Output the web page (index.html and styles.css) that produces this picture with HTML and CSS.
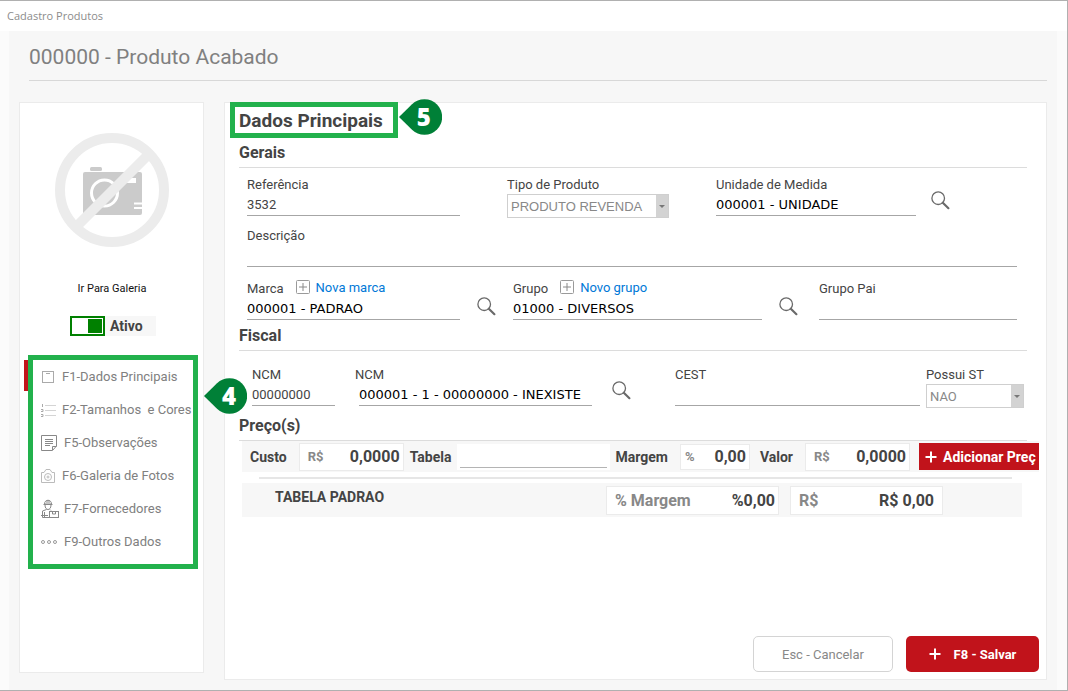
FILE: index.html
```html
<!DOCTYPE html>
<html lang="pt-BR">
<head>
    <meta charset="UTF-8">
    <meta name="viewport" content="width=device-width, initial-scale=1.0">
    <title>Cadastro Produtos</title>
    <link rel="stylesheet" href="styles.css">
</head>
<body>
    <svg width="0" height="0" class="sprite">
        <symbol id="lens" viewBox="0 0 19 19">
            <circle cx="7.2" cy="7.2" r="6.3" fill="none" stroke="#6a6a6a" stroke-width="1.3"/>
            <path d="M11.8 11.8L17.4 17.2" stroke="#6a6a6a" stroke-width="2.2" stroke-linecap="round"/>
        </symbol>
        <symbol id="plus-box" viewBox="0 0 14 14">
            <rect x="0.5" y="0.5" width="13" height="13" rx="1" fill="none" stroke="#9a9a9a"/>
            <path d="M3 7H11M7 3V11" stroke="#8a8a8a"/>
        </symbol>
        <symbol id="drop" viewBox="0 0 43 36">
            <path d="M0 18L13 5.200A17.800 17.800 0 1 1 13 30.800Z" fill="#008037"/>
        </symbol>
    </svg>

    <div class="window">
        <header class="titlebar">Cadastro Produtos</header>
        <div class="page">
            <h1>000000 - Produto Acabado</h1>
            <div class="columns">
                <aside class="card sidebar">
                    <svg class="no-photo" viewBox="0 0 114 114" width="114" height="114">
                        <rect x="35" y="34" width="12" height="4" rx="1.500" fill="#cbcbcb"/>
                        <rect x="28" y="39" width="59" height="43" rx="2" fill="#cbcbcb"/>
                        <circle cx="49.500" cy="60" r="13" fill="none" stroke="#fff" stroke-width="3"/>
                        <path d="M66 47.500H81" stroke="#fff" stroke-width="5"/>
                        <path d="M79 70.500H87M79 75H87" stroke="#fff" stroke-width="2"/>
                        <path d="M21 94L93 22" stroke="#ececec" stroke-width="10"/>
                        <circle cx="57" cy="57" r="52" fill="none" stroke="#ececec" stroke-width="10"/>
                    </svg>
                    <a class="gallery" href="#">Ir Para Galeria</a>
                    <div class="status">
                        <input type="checkbox" id="ativo" checked>
                        <label for="ativo">Ativo</label>
                    </div>
                    <nav class="menu">
                        <a class="active" href="#">
                            <svg width="16" height="16" viewBox="0 0 16 16" fill="none" stroke="#aaa"><rect x="1.500" y="2.500" width="11" height="11"/><path d="M5 4.500H9"/></svg>
                            F1-Dados Principais
                        </a>
                        <a href="#">
                            <svg width="16" height="16" viewBox="0 0 16 16" fill="none" stroke="#d4d4d4"><path d="M4 3.500H15M4 8.500H15M4 13.500H15"/><path d="M1.500 2V5M0 7.500H2V9.500H0M0 12.500H2V14.500H0" stroke="#aaa"/></svg>
                            F2-Tamanhos&nbsp; e Cores
                        </a>
                        <a href="#">
                            <svg width="18" height="18" viewBox="0 0 18 18" fill="none" stroke="#888"><path d="M0.500 1.500H15.500V12L11.500 16.500H0.500ZM11.500 16V12.500H15.500"/><path d="M4 5.500H12M4 7.500H12M4 9.500H12M4 11.500H9"/></svg>
                            F5-Observações
                        </a>
                        <a href="#">
                            <svg width="16" height="16" viewBox="0 0 16 16" fill="none" stroke="#bbb"><path d="M0.500 4.500H3L5 1.500H9L11 4.500H13.500V14.500H0.500Z"/><circle cx="7" cy="9" r="3.500"/><circle cx="7" cy="9" r="1"/></svg>
                            F6-Galeria de Fotos
                        </a>
                        <a href="#">
                            <svg width="18" height="20" viewBox="0 0 18 20" fill="none" stroke="#888"><path d="M3.500 5C3.500 0 10.500 0 10.500 5ZM2.500 5.500H11.500M4 6C4 12 10 12 10 6M6 1V4M8 1V4"/><path d="M5.500 10.500L1.500 12V18.500H8M9 10.500L10 11.500M3.500 13V18M0 16.500H7"/><rect x="8.500" y="12.500" width="9" height="6"/><path d="M11.500 12.500V15H14.500V12.500"/></svg>
                            F7-Fornecedores
                        </a>
                        <a href="#">
                            <svg width="18" height="6" viewBox="0 0 18 6" fill="none" stroke="#999"><circle cx="2" cy="3" r="1.500"/><circle cx="8" cy="3" r="1.500"/><circle cx="14" cy="3" r="1.500"/></svg>
                            F9-Outros Dados
                        </a>
                        <span class="callout"><svg><use href="#drop"/></svg><b>4</b></span>
                    </nav>
                </aside>

                <main class="card content">
                    <h2>Dados Principais<span class="callout"><svg><use href="#drop"/></svg><b>5</b></span></h2>

                    <h3>Gerais</h3>
                    <div class="row row-ref">
                        <div class="field">
                            <label for="referencia">Referência</label>
                            <input type="text" id="referencia" value="3532">
                        </div>
                        <div class="field">
                            <label for="tipo">Tipo de Produto</label>
                            <div class="select arial"><select id="tipo"><option>PRODUTO REVENDA</option></select></div>
                        </div>
                        <div class="with-lens">
                            <div class="field">
                                <label for="unidade">Unidade de Medida</label>
                                <input class="code" type="text" id="unidade" value="000001 - UNIDADE">
                            </div>
                            <button class="lens" aria-label="Buscar unidade"><svg><use href="#lens"/></svg></button>
                        </div>
                    </div>
                    <div class="row row-desc">
                        <div class="field">
                            <label for="descricao">Descrição</label>
                            <input type="text" id="descricao">
                        </div>
                    </div>
                    <div class="row row-group">
                        <div class="field">
                            <div class="label-line">
                                <label for="marca">Marca</label>
                                <a class="add" href="#"><svg><use href="#plus-box"/></svg>Nova marca</a>
                            </div>
                            <input class="code" type="text" id="marca" value="000001 - PADRAO">
                        </div>
                        <button class="lens" aria-label="Buscar marca"><svg><use href="#lens"/></svg></button>
                        <div class="field">
                            <div class="label-line">
                                <label for="grupo">Grupo</label>
                                <a class="add" href="#"><svg><use href="#plus-box"/></svg>Novo grupo</a>
                            </div>
                            <input class="code" type="text" id="grupo" value="01000 - DIVERSOS">
                        </div>
                        <button class="lens" aria-label="Buscar grupo"><svg><use href="#lens"/></svg></button>
                        <div class="field parent-group">
                            <label for="grupo-pai">Grupo Pai</label>
                            <input type="text" id="grupo-pai">
                        </div>
                    </div>

                    <h3>Fiscal</h3>
                    <div class="row row-fiscal">
                        <div class="field">
                            <label for="ncm">NCM</label>
                            <input type="text" id="ncm" value="00000000">
                        </div>
                        <div class="field ncm-name">
                            <label for="ncm-nome">NCM</label>
                            <input class="code" type="text" id="ncm-nome" value="000001 - 1 - 00000000 - INEXISTE">
                        </div>
                        <button class="lens" aria-label="Buscar NCM"><svg><use href="#lens"/></svg></button>
                        <div class="cest">
                            <div class="field">
                                <label for="cest">CEST</label>
                                <input type="text" id="cest">
                            </div>
                            <div class="field st">
                                <label for="st">Possui ST</label>
                                <div class="select"><select id="st"><option>NAO</option></select></div>
                            </div>
                        </div>
                    </div>

                    <h3>Preço(s)</h3>
                    <div class="prices">
                        <label for="custo">Custo</label>
                        <div class="money"><span>R$</span><input type="text" id="custo" value="0,0000"></div>
                        <label for="tabela">Tabela</label>
                        <div class="table-name"><input type="text" id="tabela"></div>
                        <label for="margem">Margem</label>
                        <div class="money percent"><span>%</span><input type="text" id="margem" value="0,00"></div>
                        <label for="valor">Valor</label>
                        <div class="money"><span>R$</span><input type="text" id="valor" value="0,0000"></div>
                        <button class="add-price">
                            <svg width="12" height="12" viewBox="0 0 12 12"><path d="M0.500 6H11.500M6 0.500V11.500" stroke="#fff" stroke-width="2"/></svg>
                            Adicionar Preç
                        </button>
                    </div>
                    <hr>
                    <div class="price-item">
                        <strong>TABELA PADRAO</strong>
                        <div class="money wide"><label for="item-margem">% Margem</label><input type="text" id="item-margem" value="%0,00"></div>
                        <div class="money wide"><label for="item-valor">R$</label><input type="text" id="item-valor" value="R$ 0,00"></div>
                    </div>

                    <footer>
                        <button class="cancel">Esc - Cancelar</button>
                        <button class="save">
                            <svg width="12" height="12" viewBox="0 0 12 12"><path d="M0.500 6H11.500M6 0.500V11.500" stroke="#fff" stroke-width="2"/></svg>
                            F8 - Salvar
                        </button>
                    </footer>
                </main>
            </div>
        </div>
    </div>
</body>
</html>
```
FILE: styles.css
```css
* {
    box-sizing: border-box;
}
body {
    margin: 0;
    font-family: Roboto, "Liberation Sans", sans-serif;
    font-size: 13px;
    color: #444444;
}
input, select, button {
    font: inherit;
    color: inherit;
    margin: 0;
    padding: 0;
    border: 0;
    border-radius: 0;
    background: none;
    min-width: 0;
}
a {
    text-decoration: none;
}
.sprite {
    position: absolute;
}

/* window */
.window {
    min-height: 100vh;
    display: flex;
    flex-direction: column;
    background-color: #fbfbfb;
    border: 1px solid #b0b0b0;
    border-left: 0;
}
.titlebar {
    height: 30px;
    line-height: 30px;
    padding-left: 7px;
    background-color: #ffffff;
    color: #8c8c8c;
    font-family: "Open Sans", "Noto Sans", sans-serif;
    font-size: 11px;
}
.page {
    flex: 1;
    display: flex;
    flex-direction: column;
    margin: 0 10px 0 9px;
    padding: 0 10px 10px 10px;
    background-color: #f7f7f7;
}
h1 {
    margin: 0 0 21px 10px;
    height: 50px;
    line-height: 52px;
    border-bottom: 1px solid #d8d8d8;
    font-size: 21px;
    font-weight: 400;
    color: #808080;
}
.columns {
    flex: 1;
    display: grid;
    grid-template-columns: 185px 1fr;
    gap: 20px;
}
.card {
    background-color: #ffffff;
    box-shadow: inset 0 0 0 1px #ebebeb;
}

/* sidebar */
.sidebar {
    display: flex;
    flex-direction: column;
    align-items: center;
    margin-bottom: 7px;
    padding: 31px 6px 0 9px;
}
.no-photo {
    margin-right: 2px;
}
.gallery {
    margin: 32px 2px 17px 0;
    line-height: 20px;
    font-size: 11px;
    color: #111111;
}
.status {
    display: flex;
    width: 86px;
    height: 20px;
    margin-bottom: 19px;
    background-color: #f7f7f7;
}
.status input {
    appearance: none;
    width: 35px;
    height: 20px;
    border: 2px solid #008000;
    background: linear-gradient(#008000, #008000) no-repeat right 1px center / 14px 14px #ffffff;
}
.status label {
    padding-left: 5px;
    line-height: 20px;
    font-size: 14px;
    font-weight: 700;
}
.menu {
    position: relative;
    align-self: stretch;
    border: 5px solid #22b14c;
    padding: 0 0 6px 8px;
}
.menu a {
    position: relative;
    display: flex;
    align-items: center;
    gap: 5px;
    height: 33px;
    white-space: nowrap;
    color: #808080;
}
.menu a svg {
    flex: none;
}
.menu .active::before {
    content: "";
    position: absolute;
    left: -17px;
    top: 0;
    width: 4px;
    height: 31px;
    background-color: #c1131b;
}

/* numbered callouts */
.callout {
    position: absolute;
    z-index: 1;
    left: calc(100% + 6px);
    width: 43px;
    height: 36px;
    color: #ffffff;
    font-family: "Open Sans", "Noto Sans", sans-serif;
    font-size: 24px;
    line-height: 36px;
    text-align: center;
}
.callout svg {
    position: absolute;
    left: 0;
    top: 0;
    width: 43px;
    height: 36px;
}
.callout b {
    position: relative;
    padding-left: 7px;
    font-weight: 800;
}
.menu .callout {
    left: calc(100% + 11px);
    top: 18px;
}

/* content */
.content {
    display: flex;
    flex-direction: column;
    padding-bottom: 8px;
}
h2 {
    position: relative;
    align-self: flex-start;
    margin: 0 0 0 6px;
    padding: 0 10px 0 4px;
    border: 5px solid #22b14c;
    line-height: 28px;
    height: 36px;
    font-size: 19px;
    font-weight: 700;
}
h2 .callout {
    top: -8px;
}
h3 {
    margin: 0 20px 0 15px;
    height: 30px;
    line-height: 30px;
    border-bottom: 1px solid #dcdcdc;
    font-size: 16px;
    font-weight: 700;
}
.row {
    display: grid;
    margin: 0 30px 0 23px;
}
.row-ref {
    grid-template-columns: 213fr 162fr 301fr;
    column-gap: 47px;
    padding-top: 8px;
}
.row-desc {
    padding-top: 9px;
}
.row-group {
    grid-template-columns: 213fr 19px 249fr 19px 202fr;
    column-gap: 17px;
    padding: 13px 0 1px;
}
.row-fiscal {
    grid-template-columns: 83fr 237fr 19px 373fr;
    column-gap: 20px;
    margin: 0 23px 0 28px;
    padding: 15px 0 3px;
}
.field {
    display: flex;
    flex-direction: column;
    min-width: 0;
}
.field label {
    line-height: 18px;
}
.field input {
    height: 22px;
    border-bottom: 1px solid #a6a6a6;
}
.field .code {
    font-family: "DejaVu Sans", sans-serif;
    color: #000000;
}
.label-line {
    display: flex;
    gap: 12px;
}
.add {
    display: flex;
    gap: 6px;
    line-height: 16px;
    color: #0078d7;
}
.add svg {
    width: 14px;
    height: 14px;
}
.parent-group {
    padding-left: 4px;
}
.with-lens {
    display: flex;
    gap: 15px;
    padding-right: 67px;
}
.with-lens .field {
    flex: 1;
}
.lens {
    align-self: end;
    padding-bottom: 8px;
}
.lens svg {
    display: block;
    width: 19px;
    height: 19px;
}
.row-group .lens {
    padding-bottom: 4px;
}
.select {
    position: relative;
    height: 24px;
    border: 1px solid #cfcfcf;
}
.select select {
    appearance: none;
    width: 100%;
    height: 100%;
    padding-left: 3px;
    color: #888888;
}
.select.arial {
    font-family: "Liberation Sans", Arial, sans-serif;
}
.select::after {
    content: "";
    position: absolute;
    right: 0;
    top: 0;
    width: 12px;
    height: 100%;
    background-color: #d3d3d3;
    pointer-events: none;
}
.select::before {
    content: "";
    position: absolute;
    z-index: 1;
    right: 3px;
    top: 10px;
    border: 3px solid transparent;
    border-top-color: #777777;
    pointer-events: none;
}
.ncm-name input {
    margin-left: 4px;
}
.cest {
    display: flex;
    gap: 6px;
    padding-left: 24px;
}
.cest .field {
    flex: 1;
}
.cest .st {
    flex: 0 0 98px;
}

/* prices */
.prices {
    display: flex;
    align-items: center;
    height: 31px;
    margin: 0 8px 0 18px;
    padding-left: 8px;
    background-color: #f7f7f7;
    font-weight: 700;
}
.prices > label {
    font-size: 14px;
}
.money {
    display: flex;
    align-items: center;
    width: 105px;
    height: 28px;
    margin: 0 6px 0 12px;
    padding: 0 3px 0 8px;
    background-color: #ffffff;
    border: 1px solid #ebebeb;
    color: #888888;
    font-weight: 700;
}
.money input {
    flex: 1;
    width: 0;
    text-align: right;
    font-size: 16px;
    color: #444444;
}
.percent {
    width: 70px;
    height: 26px;
    margin-right: 10px;
    padding-left: 4px;
}
.table-name {
    flex: 1;
    height: 26px;
    margin: 0 6px;
    padding: 0 3px;
    background-color: #ffffff;
}
.table-name input {
    width: 100%;
    height: 24px;
    border-bottom: 1px solid #b4b4b4;
}
.add-price {
    display: flex;
    align-items: center;
    gap: 6px;
    width: 120px;
    height: 27px;
    margin-left: 3px;
    padding-left: 6px;
    white-space: nowrap;
    background-color: #c1131b;
    color: #ffffff;
    font-size: 14px;
    font-weight: 700;
}
.add-price svg, .save svg {
    flex: none;
}
hr {
    align-self: stretch;
    height: 2px;
    margin: 5px 35px 4px;
    border: 0;
    background-color: #e6e6e6;
}
.price-item {
    display: flex;
    align-items: center;
    height: 34px;
    margin: 0 25px 0 18px;
    padding: 0 79px 0 33px;
    background-color: #f7f7f7;
}
.price-item strong {
    flex: 1;
    padding-bottom: 6px;
    font-size: 14px;
}
.price-item .wide {
    width: 173px;
    height: 29px;
    margin: 0;
    font-size: 16px;
}
.price-item .wide + .wide {
    width: 153px;
    margin-left: 11px;
    padding-right: 8px;
}

footer {
    display: flex;
    justify-content: flex-end;
    gap: 13px;
    margin-top: auto;
    padding-right: 8px;
}
footer button {
    height: 36px;
    border-radius: 5px;
}
.cancel {
    width: 140px;
    border: 1px solid #d4d4d4;
    color: #888888;
}
.save {
    display: flex;
    align-items: center;
    justify-content: center;
    gap: 13px;
    width: 133px;
    background-color: #c1131b;
    color: #ffffff;
    font-weight: 700;
}
```
